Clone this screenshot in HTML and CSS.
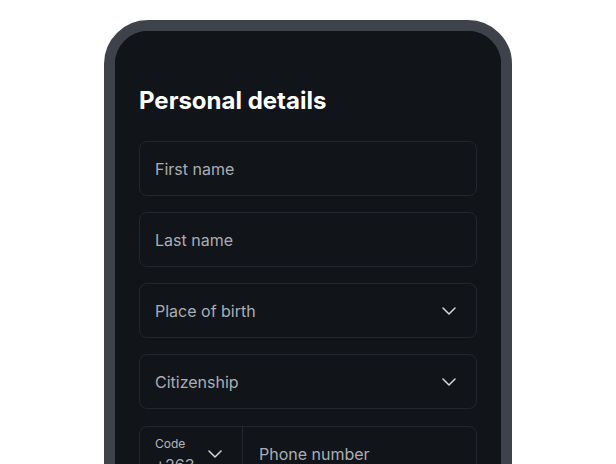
FILE: index.html
```html
<!DOCTYPE html>
<html lang="en">
<head>
<meta charset="utf-8">
<title>Personal details</title>
<link rel="stylesheet" href="styles.css">
</head>
<body>
<div class="phone">
  <div class="screen">
    <h1 class="title">Personal details</h1>
    <form class="form">
      <div class="field"><span class="placeholder">First name</span></div>
      <div class="field"><span class="placeholder">Last name</span></div>
      <div class="field select"><span class="placeholder">Place of birth</span>
        <svg class="chev" width="14" height="8" viewBox="0 0 14 8"><path d="M1 1l6 6 6-6" fill="none" stroke="#d4d7dc" stroke-width="1.5" stroke-linecap="round" stroke-linejoin="round"/></svg>
      </div>
      <div class="field select"><span class="placeholder">Citizenship</span>
        <svg class="chev" width="14" height="8" viewBox="0 0 14 8"><path d="M1 1l6 6 6-6" fill="none" stroke="#d4d7dc" stroke-width="1.5" stroke-linecap="round" stroke-linejoin="round"/></svg>
      </div>
      <div class="field phone-field">
        <div class="code">
          <div class="code-text">
            <span class="code-label">Code</span>
            <span class="code-value">+263</span>
          </div>
          <svg class="chev" width="14" height="8" viewBox="0 0 14 8"><path d="M1 1l6 6 6-6" fill="none" stroke="#d4d7dc" stroke-width="1.5" stroke-linecap="round" stroke-linejoin="round"/></svg>
        </div>
        <div class="number"><span class="placeholder">Phone number</span></div>
      </div>
    </form>
  </div>
</div>
</body>
</html>
```

FILE: styles.css
```css
html, body {
  margin: 0;
  padding: 0;
  background: #ffffff;
  overflow: hidden;
  height: 464px;
}
body {
  font-family: Inter, "Noto Sans", sans-serif;
}
.phone {
  box-sizing: border-box;
  margin: 20px 0 0 104px;
  width: 408px;
  height: 600px;
  border: 11px solid #3e424b;
  border-radius: 44px;
  background: #111419;
}
.screen {
  box-sizing: border-box;
  height: 100%;
  border-radius: 33px;
  background: #111419;
  padding: 54px 24px 0 24px;
}
.title {
  margin: 0 0 24px 0;
  font-size: 24px;
  line-height: 32px;
  font-weight: 700;
  color: #ffffff;
}
.form {
  display: flex;
  flex-direction: column;
  gap: 16px;
}
.field {
  box-sizing: border-box;
  height: 55px;
  border: 1px solid #22262d;
  border-radius: 8px;
  display: flex;
  align-items: center;
  padding: 0 20px 0 15px;
}
.select {
  justify-content: space-between;
}
.placeholder {
  font-size: 16px;
  line-height: 20px;
  color: #aaaeb5;
}
.chev {
  display: block;
  flex: none;
}
.phone-field {
  padding: 0;
  align-items: stretch;
  margin-top: 1px;
}
.code {
  box-sizing: border-box;
  width: 103px;
  border-right: 1px solid #22262d;
  display: flex;
  align-items: center;
  justify-content: space-between;
  padding: 0 20px 0 15px;
}
.code-text {
  display: flex;
  flex-direction: column;
  gap: 3px;
  padding-top: 3px;
}
.code-label {
  font-size: 12px;
  line-height: 16px;
  color: #b4b8bf;
}
.code-value {
  font-size: 16px;
  line-height: 20px;
  color: #aaaeb5;
}
.number {
  display: flex;
  align-items: center;
  padding-left: 16px;
}
```
